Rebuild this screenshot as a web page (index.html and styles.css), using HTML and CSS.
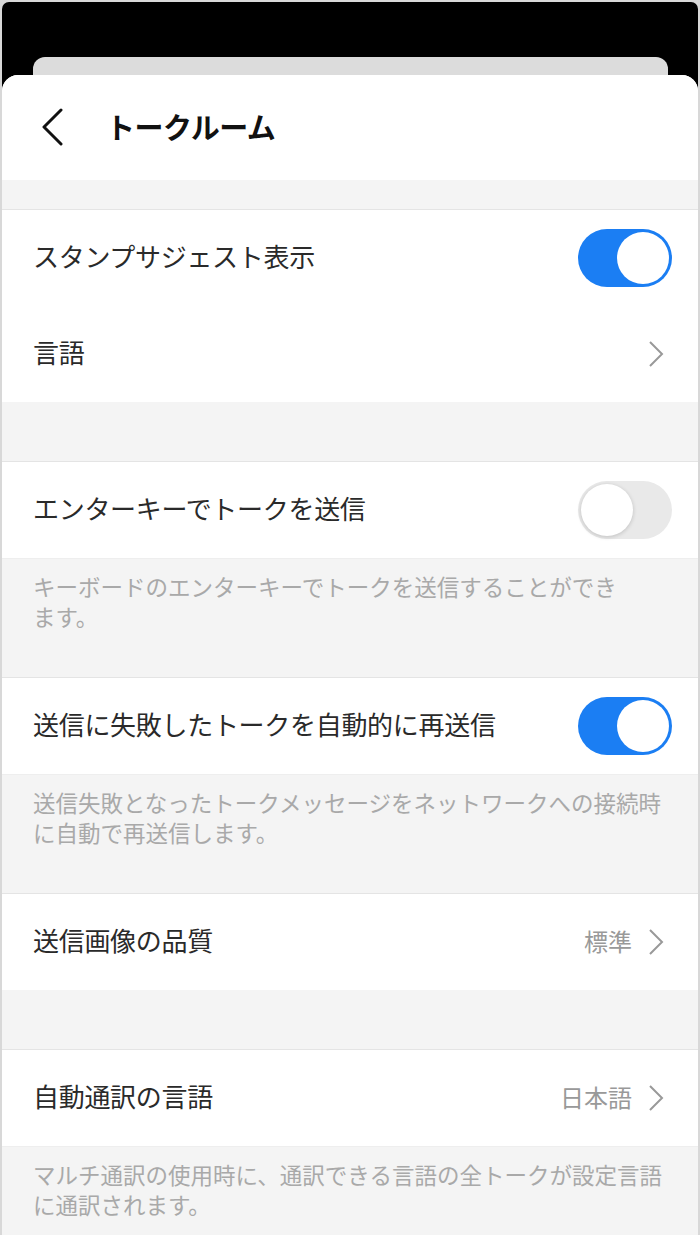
FILE: index.html
```html
<!DOCTYPE html>
<html lang="ja">
<head>
<meta charset="utf-8">
<title>トークルーム</title>
<link rel="stylesheet" href="styles.css">
</head>
<body>
<div class="screen">
  <div class="behind"></div>
  <div class="sheet">
    <div class="header">
      <svg class="back" width="26" height="38" viewBox="0 0 26 38">
        <path d="M21 2 L4 19 L21 36" fill="none" stroke="#111" stroke-width="3" stroke-linecap="round" stroke-linejoin="round"/>
      </svg>
      <h1 class="title">トークルーム</h1>
    </div>

    <div class="gap small"></div>
    <div class="group">
      <div class="row">
        <span class="label">スタンプサジェスト表示</span>
        <span class="toggle on"><span class="knob"></span></span>
      </div>
      <div class="row">
        <span class="label">言語</span>
        <span class="more">
          <svg class="chev" width="16" height="28" viewBox="0 0 16 28"><path d="M2 2 L14 14 L2 26" fill="none" stroke="#999" stroke-width="2"/></svg>
        </span>
      </div>
    </div>

    <div class="gap"></div>
    <div class="group">
      <div class="row">
        <span class="label">エンターキーでトークを送信</span>
        <span class="toggle"><span class="knob"></span></span>
      </div>
    </div>
    <p class="note">キーボードのエンターキーでトークを送信することができ<br>ます。</p>

    <div class="group">
      <div class="row">
        <span class="label">送信に失敗したトークを自動的に再送信</span>
        <span class="toggle on"><span class="knob"></span></span>
      </div>
    </div>
    <p class="note">送信失敗となったトークメッセージをネットワークへの接続時<br>に自動で再送信します。</p>

    <div class="group">
      <div class="row">
        <span class="label">送信画像の品質</span>
        <span class="more">
          <span class="value">標準</span>
          <svg class="chev" width="16" height="28" viewBox="0 0 16 28"><path d="M2 2 L14 14 L2 26" fill="none" stroke="#999" stroke-width="2"/></svg>
        </span>
      </div>
    </div>

    <div class="gap"></div>
    <div class="group">
      <div class="row">
        <span class="label">自動通訳の言語</span>
        <span class="more">
          <span class="value">日本語</span>
          <svg class="chev" width="16" height="28" viewBox="0 0 16 28"><path d="M2 2 L14 14 L2 26" fill="none" stroke="#999" stroke-width="2"/></svg>
        </span>
      </div>
    </div>
    <p class="note">マルチ通訳の使用時に、通訳できる言語の全トークが設定言語<br>に通訳されます。</p>
  </div>
</div>
</body>
</html>
```

FILE: styles.css
```css
html, body {
  margin: 0;
  padding: 0;
}

body {
  background-color: #d8d8d8;
  padding: 2px 2px 0;
  height: 1233px;
  overflow: hidden;
  font-family: "Noto Sans CJK JP", "Noto Sans", sans-serif;
}

.screen {
  background-color: #000;
  border-radius: 7px 7px 0 0;
  padding-top: 55px;
  height: 1178px;
}

.behind {
  height: 18px;
  margin: 0 30px 0 31px;
  background-color: #dcdcdc;
  border-radius: 12px 12px 0 0;
}

.sheet {
  background-color: #f4f4f4;
  border-radius: 16px 16px 0 0;
  overflow: hidden;
  height: 1160px;
}

.header {
  background-color: #fff;
  height: 105px;
  display: flex;
  align-items: center;
  padding-left: 38px;
}

.back {
  display: block;
  margin-top: -2px;
}

.title {
  margin: 0 0 4px 40px;
  font-size: 29px;
  font-weight: bold;
  color: #111;
  letter-spacing: -0.5px;
}

.gap {
  height: 59px;
}

.gap.small {
  height: 29px;
}

.group {
  background-color: #fff;
  border-top: 1px solid #e4e4e4;
}

.row {
  height: 96px;
  display: flex;
  align-items: center;
  justify-content: space-between;
  padding: 0 26px 0 31px;
}

.label {
  font-size: 26px;
  color: #2a2a2a;
  letter-spacing: -0.3px;
  margin-bottom: 5px;
}

.more {
  display: flex;
  align-items: center;
  gap: 16px;
  padding-right: 8px;
}

.value {
  font-size: 24px;
  color: #999;
  margin-bottom: 4px;
}

.chev {
  display: block;
}

.toggle {
  width: 94px;
  height: 58px;
  border-radius: 29px;
  background-color: #e9e9e9;
  display: flex;
  align-items: center;
  padding: 0 3px;
  box-sizing: border-box;
}

.toggle .knob {
  width: 52px;
  height: 52px;
  border-radius: 50%;
  background-color: #fff;
  box-shadow: 0 1px 4px rgba(0, 0, 0, 0.18);
}

.toggle.on {
  background-color: #1b7ef3;
  justify-content: flex-end;
}

.toggle.on .knob {
  box-shadow: none;
}

.note {
  margin: 0;
  padding: 12px 31px 46px;
  font-size: 22.5px;
  line-height: 30px;
  color: #a9a9a9;
  border-top: 1px solid #eeeeee;
}
```
